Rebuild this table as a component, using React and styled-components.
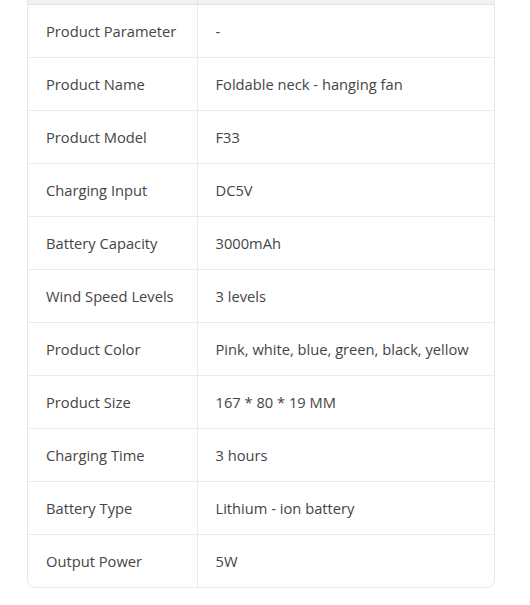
import styled, { createGlobalStyle } from "styled-components";

const GlobalStyle = createGlobalStyle`
    html, body {
        margin: 0;
        padding: 0;
        background: #ffffff;
    }
    body {
        font-family: "Open Sans", "Noto Sans", sans-serif;
    }
`;

const Page = styled.div`
    width: 530px;
    height: 605px;
    overflow: hidden;
    padding: 0 36px 0 27px;
    box-sizing: border-box;
`;

// the table is scrolled a little: only the foot of its header shows
const TableCard = styled.div`
    margin-top: -49px;
    border: 1px solid #e8e8e8;
    border-radius: 8px;
    overflow: hidden;
    width: 468px;
    box-sizing: border-box;
`;

const Table = styled.table`
    width: 100%;
    border-collapse: collapse;
    table-layout: fixed;
`;

const HeadCell = styled.th`
    height: 52px;
    background: #f2f2f2;
    border-bottom: 1px solid #e2e2e2;
    border-right: ${(p) => (p.$last ? "none" : "1px solid #e4e4e4")};
    padding: 0;
`;

const Row = styled.tr`
    border-bottom: ${(p) => (p.$last ? "none" : "1px solid #ececec")};
`;

const Cell = styled.td`
    height: 52px;
    padding: 0 18px;
    font-size: 14.7px;
    color: #454545;
    border-right: ${(p) => (p.$last ? "none" : "1px solid #ececec")};
    white-space: nowrap;
`;

const specs = [
    ["Product Parameter", "-"],
    ["Product Name", "Foldable neck - hanging fan"],
    ["Product Model", "F33"],
    ["Charging Input", "DC5V"],
    ["Battery Capacity", "3000mAh"],
    ["Wind Speed Levels", "3 levels"],
    ["Product Color", "Pink, white, blue, green, black, yellow"],
    ["Product Size", "167 * 80 * 19 MM"],
    ["Charging Time", "3 hours"],
    ["Battery Type", "Lithium - ion battery"],
    ["Output Power", "5W"],
];

export default function App() {
    return (
        <>
            <GlobalStyle />
            <Page>
                <TableCard>
                    <Table>
                        <colgroup>
                            <col style={{ width: "169px" }} />
                            <col />
                        </colgroup>
                        <thead>
                            <tr>
                                <HeadCell />
                                <HeadCell $last />
                            </tr>
                        </thead>
                        <tbody>
                            {specs.map(([name, value], i) => (
                                <Row key={name} $last={i === specs.length - 1}>
                                    <Cell>{name}</Cell>
                                    <Cell $last>{value}</Cell>
                                </Row>
                            ))}
                        </tbody>
                    </Table>
                </TableCard>
            </Page>
        </>
    );
}
